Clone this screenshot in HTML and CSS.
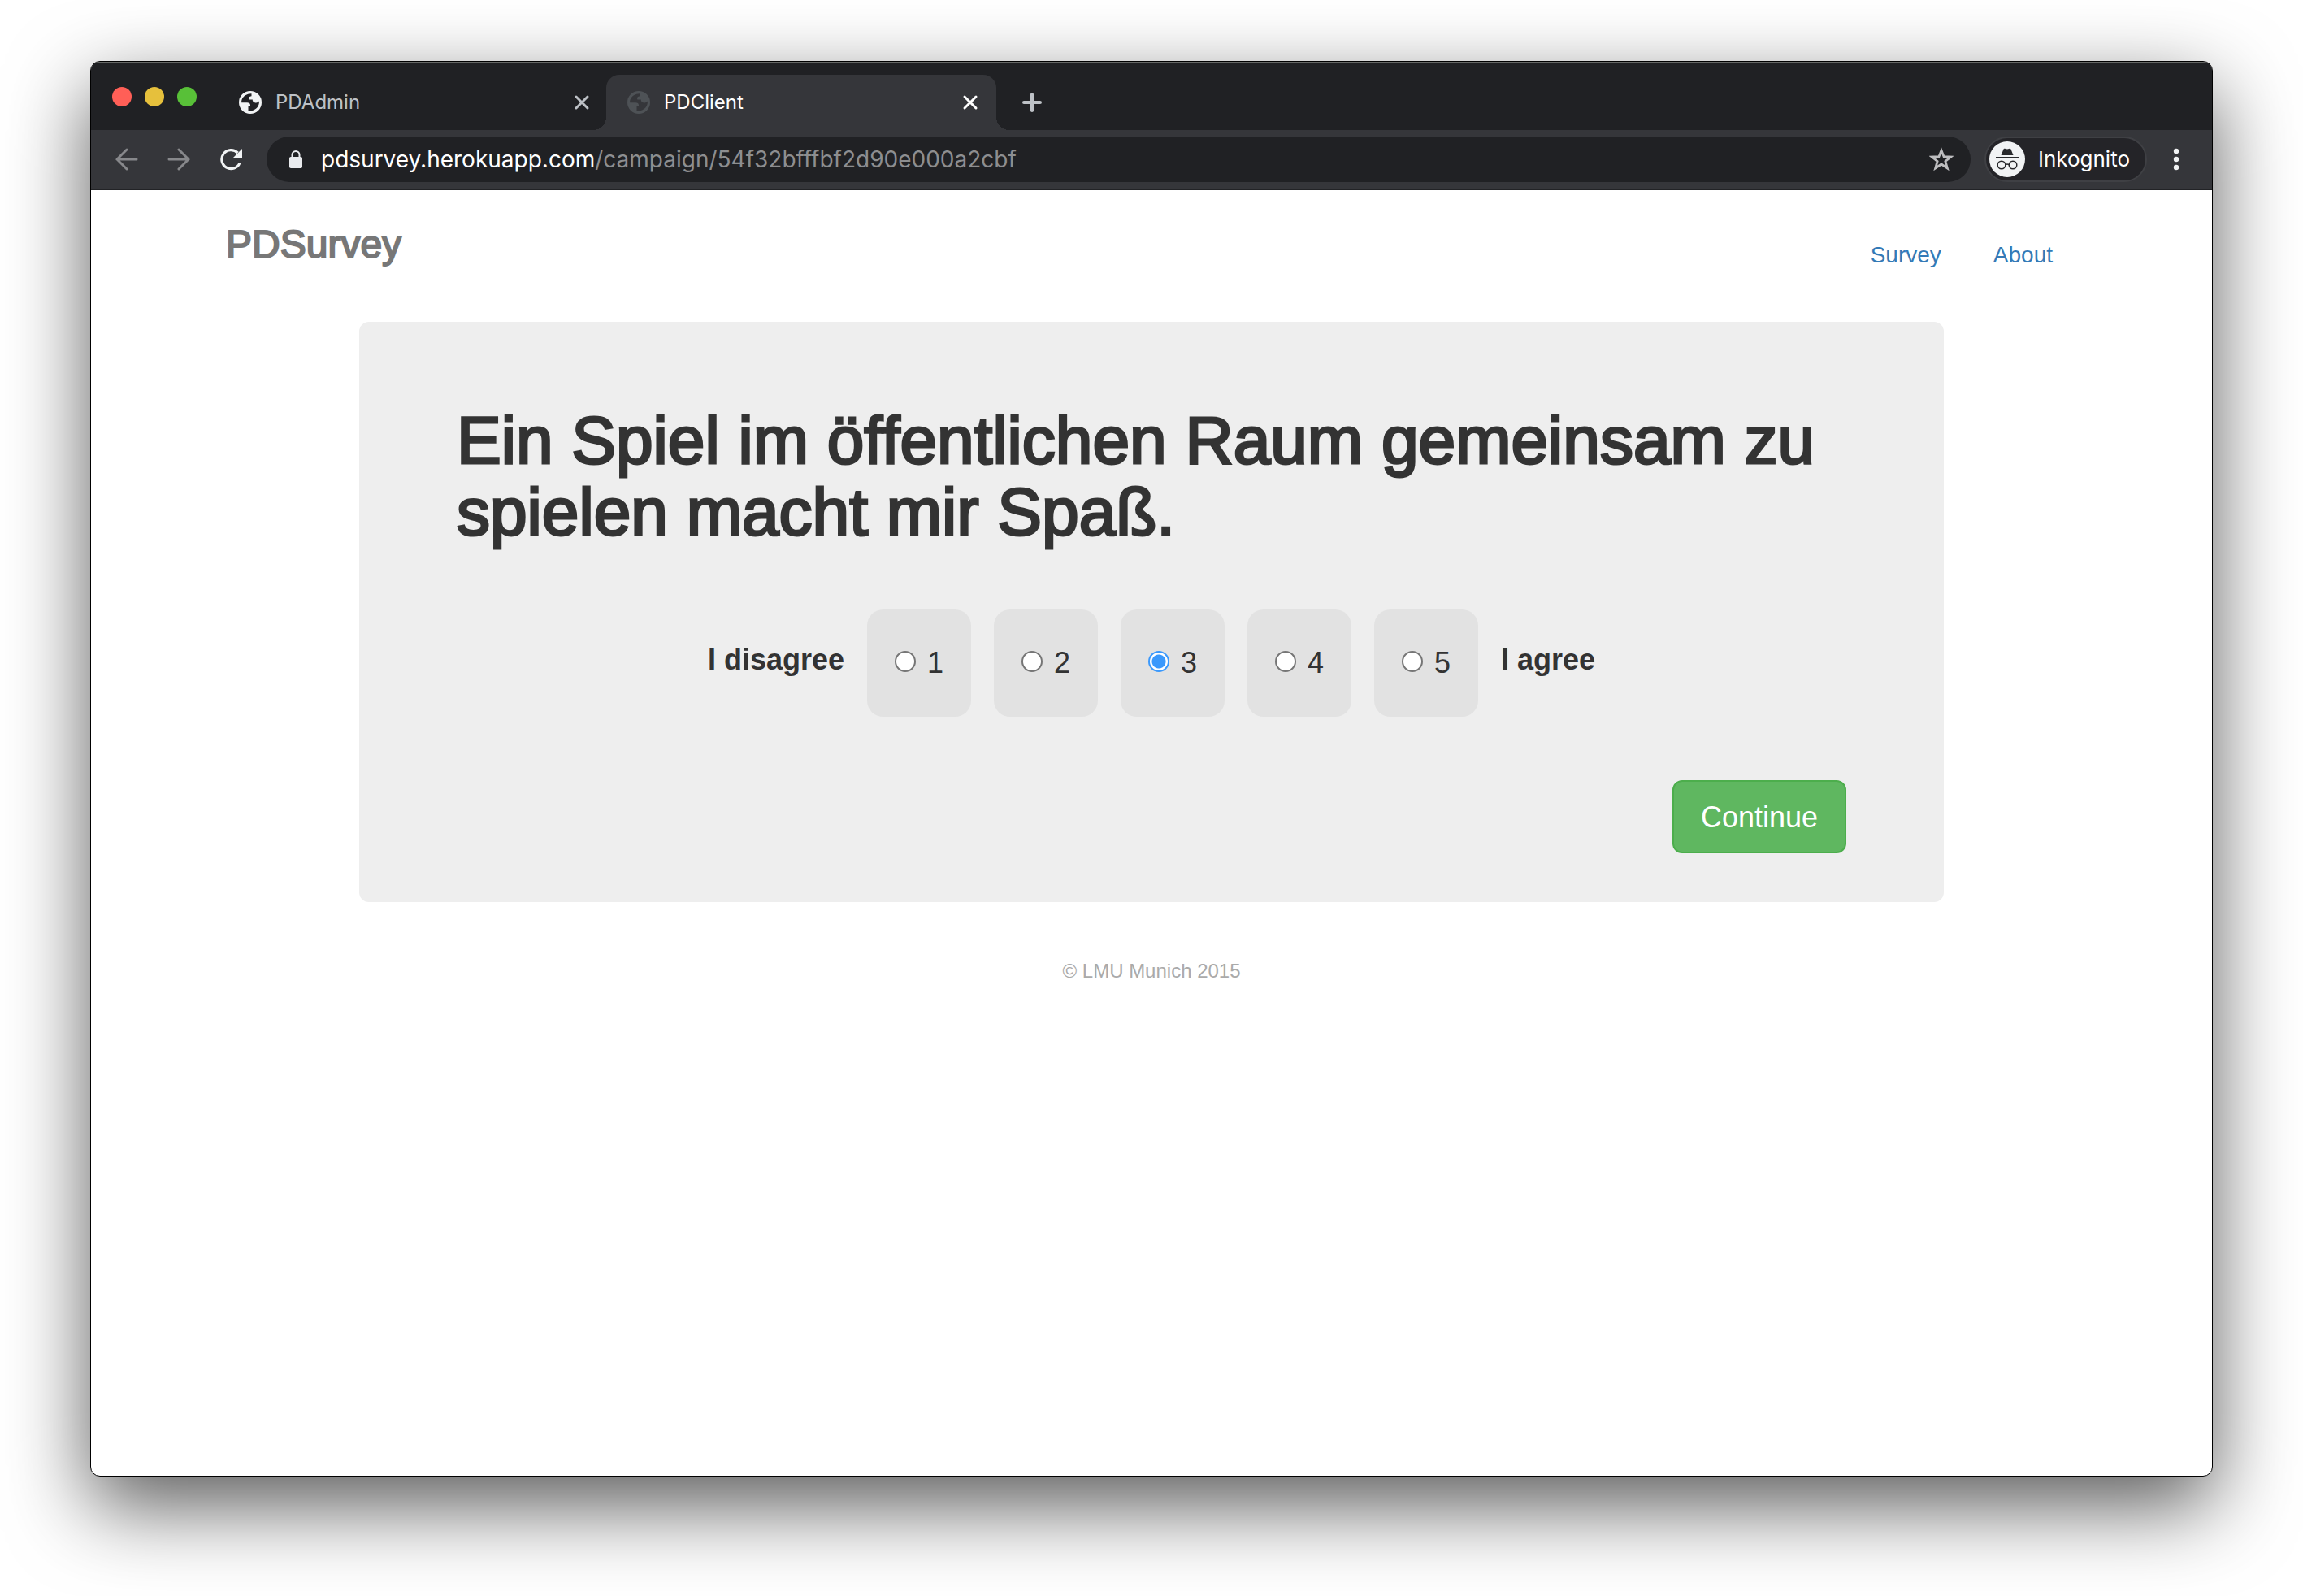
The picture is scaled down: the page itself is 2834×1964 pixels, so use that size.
FILE: index.html
```html
<!DOCTYPE html>
<html lang="de">
<head>
<meta charset="utf-8">
<title>PDClient</title>
<link rel="stylesheet" href="styles.css">
</head>
<body>
<svg class="defs" aria-hidden="true">
  <symbol id="globe" viewBox="0 0 28 28">
    <path fill-rule="evenodd" d="M14 0a14 14 0 1 0 0 28a14 14 0 0 0 0-28zM15.500 3.200C10 3 5.500 6 3.600 10.500C3.200 12 3 13 3.200 14.200H10C12.500 14.200 14 15.500 14 17.200V18.800H11.500V24.600C17 25.200 22.500 22 24.300 17C24.900 15.300 25 14 24.700 12.500C23.500 14.300 21.500 14.800 19.500 14.200C17.500 13.600 16.600 12.300 16.800 10.600H12.300C11.500 8.300 12.600 6.500 15.500 6.300z"/>
  </symbol>
  <symbol id="close" viewBox="0 0 20 20">
    <path d="M3 3L17 17M17 3L3 17" fill="none" stroke="currentColor" stroke-width="3" stroke-linecap="round"/>
  </symbol>
</svg>
<div class="window">
  <header class="chrome">
    <div class="tabstrip">
      <div class="lights"><span class="light red"></span><span class="light yellow"></span><span class="light green"></span></div>
      <div class="tab">
        <svg class="favicon"><use href="#globe"/></svg>
        <span class="tab-title">PDAdmin</span>
        <button class="icon-button" aria-label="Close PDAdmin"><svg class="close"><use href="#close"/></svg></button>
      </div>
      <div class="tab active">
        <svg class="favicon"><use href="#globe"/></svg>
        <span class="tab-title">PDClient</span>
        <button class="icon-button" aria-label="Close PDClient"><svg class="close"><use href="#close"/></svg></button>
      </div>
      <button class="icon-button new-tab" aria-label="New tab"><svg width="24" height="24" viewBox="0 0 24 24"><path d="M12 2V22M2 12H22" stroke="#bdc1c6" stroke-width="4" stroke-linecap="round"/></svg></button>
    </div>
    <div class="toolbar">
      <div class="nav-buttons">
        <button class="icon-button" aria-label="Back"><svg width="28" height="28" viewBox="0 0 28 28" fill="none" stroke="#87888b" stroke-width="3" stroke-linecap="round"><path d="M26 14H2M14 2L2 14L14 26"/></svg></button>
        <button class="icon-button" aria-label="Forward"><svg width="28" height="28" viewBox="0 0 28 28" fill="none" stroke="#87888b" stroke-width="3" stroke-linecap="round"><path d="M2 14H26M14 2L26 14L14 26"/></svg></button>
        <button class="icon-button" aria-label="Reload"><svg width="28" height="28" viewBox="0 0 28 28"><path d="M25 18.500A11.500 11.500 0 1 1 22.500 6" fill="none" stroke="#f1f3f4" stroke-width="3.200"/><path d="M28 1V12H17z" fill="#f1f3f4"/></svg></button>
      </div>
      <div class="omnibox">
        <svg class="lock" width="16" height="22" viewBox="0 0 16 22"><path d="M3.500 9V5.500a4.500 4.500 0 0 1 9 0V9" fill="none" stroke="#e8eaed" stroke-width="2"/><rect y="8" width="16" height="14" rx="2" fill="#e8eaed"/></svg>
        <div class="url"><span class="host">pdsurvey.herokuapp.com</span>/campaign/54f32bfffbf2d90e000a2cbf</div>
        <button class="icon-button" aria-label="Bookmark"><svg width="30" height="30" viewBox="0 0 30 30"><path d="M15 4L18 11.700L26.700 12L19.900 17.400L22.300 26L15 21L7.700 26L10.100 17.400L3.300 12L12 11.700z" fill="none" stroke="#bdbdbf" stroke-width="2.800"/></svg></button>
      </div>
      <div class="profile">
        <svg width="44" height="44" viewBox="0 0 44 44"><circle cx="22" cy="22" r="22" fill="#f1f3f4"/><path d="M14.500 17L17.500 9.500Q18 8.500 19 8.800L22 9.500L25 8.800Q26 8.500 26.500 9.500L29.500 17zM8 19H36V21H8z" fill="#28292c"/><g fill="none" stroke="#28292c" stroke-width="1.500"><circle cx="15" cy="29" r="4.800"/><circle cx="29" cy="29" r="4.800"/><path d="M19.800 28.600Q22 27.500 24.200 28.600"/></g></svg>
        <span>Inkognito</span>
      </div>
      <button class="icon-button" aria-label="Menu"><svg width="8" height="28" viewBox="0 0 8 28" fill="#f1f3f4"><circle cx="4" cy="4" r="3.200"/><circle cx="4" cy="14" r="3.200"/><circle cx="4" cy="24" r="3.200"/></svg></button>
    </div>
  </header>
  <div class="page">
    <div class="site-header">
      <h3 class="brand">PDSurvey</h3>
      <nav class="site-nav"><a href="#survey">Survey</a><a href="#about">About</a></nav>
    </div>
    <main class="jumbotron">
      <form>
        <h1 class="question">Ein Spiel im öffentlichen Raum gemeinsam zu spielen macht mir Spaß.</h1>
        <div class="scale">
          <strong class="scale-end">I disagree</strong>
          <label class="option"><input type="radio" name="answer" value="1">1</label>
          <label class="option"><input type="radio" name="answer" value="2">2</label>
          <label class="option"><input type="radio" name="answer" value="3" checked>3</label>
          <label class="option"><input type="radio" name="answer" value="4">4</label>
          <label class="option"><input type="radio" name="answer" value="5">5</label>
          <strong class="scale-end">I agree</strong>
        </div>
        <div class="actions"><button class="continue" type="button">Continue</button></div>
      </form>
    </main>
    <footer class="footer">© LMU Munich 2015</footer>
  </div>
</div>
</body>
</html>
```
FILE: styles.css
```css
* { box-sizing: border-box; }
body {
  margin: 0;
  padding: 75px 111px 147px;
  min-height: 100vh;
  display: flex;
  background: #fff;
  color: #333;
  font-family: "Liberation Sans", Arial, sans-serif;
}
.defs { position: absolute; width: 0; height: 0; }
svg { display: block; flex: none; }
.window {
  flex: 1;
  display: flex;
  flex-direction: column;
  border: 1px solid #000;
  border-radius: 12px;
  background: #fff;
  overflow: hidden;
  box-shadow: 0 36px 100px rgba(0, 0, 0, 0.65);
}
.icon-button {
  display: flex;
  flex: none;
  padding: 0;
  border: 0;
  background: none;
  color: inherit;
}

/* Browser frame */
.chrome { font-family: Inter, Roboto, sans-serif; background: #35363a; }
.tabstrip {
  display: flex;
  align-items: flex-end;
  height: 84px;
  padding-left: 26px;
  background: #202124;
  border-top: 2px solid #666866;
}
.lights { display: flex; gap: 16px; width: 130px; padding-bottom: 29px; }
.light { width: 24px; height: 24px; border-radius: 50%; }
.red { background: #ff5f57; }
.yellow { background: #e6c03c; }
.green { background: #58c038; }
.tab {
  position: relative;
  display: flex;
  align-items: center;
  gap: 17px;
  width: 478px;
  height: 68px;
  padding: 0 20px 0 26px;
  color: #bdc1c6;
  font-size: 24px;
  line-height: 28px;
}
.tab-title { flex: 1; }
.favicon { width: 28px; height: 28px; fill: #f1f3f4; }
.close { width: 20px; height: 20px; }
.active {
  width: 480px;
  padding-right: 22px;
  border-radius: 16px 16px 0 0;
  background: #35363a;
  color: #fff;
}
.active .favicon { fill: #4e5256; }
.active::before, .active::after {
  content: "";
  position: absolute;
  bottom: 0;
  width: 16px;
  height: 16px;
}
.active::before { right: 100%; background: radial-gradient(circle at 0 0, transparent 16px, #35363a 16px); }
.active::after { left: 100%; background: radial-gradient(circle at 100% 0, transparent 16px, #35363a 16px); }
.new-tab { margin-left: 32px; padding-bottom: 22px; }
.toolbar {
  display: flex;
  align-items: center;
  gap: 17px;
  height: 74px;
  padding: 0 40px 0 30px;
  border-bottom: 2px solid #222326;
}
.nav-buttons { display: flex; gap: 36px; margin-right: 13px; }
.omnibox {
  flex: 1;
  display: flex;
  align-items: center;
  gap: 23px;
  height: 56px;
  padding: 0 21px 0 28px;
  border-radius: 28px;
  background: #202124;
}
.url { flex: 1; color: #8d8e90; font-size: 28px; line-height: 34px; }
.host { color: #fff; }
.profile {
  display: flex;
  align-items: center;
  gap: 16px;
  height: 56px;
  margin-right: 15px;
  padding: 0 19px 0 4px;
  border: 2px solid #3f4044;
  border-radius: 28px;
  background: #242428;
  color: #fff;
  font-size: 26px;
  line-height: 32px;
}

/* Survey page */
.page { padding: 40px 166px; }
.site-header {
  display: flex;
  justify-content: space-between;
  height: 122px;
  padding-right: 30px;
}
.brand {
  margin: 0;
  color: #777;
  font-size: 48px;
  font-weight: 400;
  line-height: 54px;
  -webkit-text-stroke: 2px currentColor;
}
.site-nav { display: flex; gap: 64px; padding-top: 20px; font-size: 28px; line-height: 40px; }
.site-nav a { color: #337ab7; text-decoration: none; }
.jumbotron {
  max-width: 1950px;
  margin: 0 auto;
  padding: 102px 120px 60px;
  border-radius: 12px;
  background: #eee;
}
.question {
  margin: 0;
  font-size: 82px;
  font-weight: 400;
  line-height: 88px;
  -webkit-text-stroke: 3px currentColor;
}
.scale {
  display: flex;
  justify-content: center;
  align-items: center;
  gap: 28px;
  margin-top: 76px;
  font-size: 36px;
  line-height: 52px;
}
.scale-end { padding-bottom: 8px; }
.option {
  display: flex;
  justify-content: center;
  align-items: center;
  gap: 14px;
  width: 128px;
  height: 132px;
  border-radius: 20px;
  background: #e2e2e2;
}
.option input {
  appearance: none;
  width: 26px;
  height: 26px;
  margin: 0 0 4px;
  border: 2px solid #767676;
  border-radius: 50%;
  background: #fff;
}
.option input:checked {
  border-color: #3b99fc;
  background: radial-gradient(circle, #3b99fc 8px, #fff 9px);
}
.actions { display: flex; justify-content: flex-end; margin-top: 78px; }
.continue {
  height: 90px;
  padding: 2px 33px 0;
  border: 2px solid #4cae4c;
  border-radius: 12px;
  background: #5fb760;
  color: #fff;
  font-family: inherit;
  font-size: 36px;
  line-height: 48px;
}
.footer {
  margin-top: 68px;
  color: #aaa;
  font-size: 24px;
  line-height: 34px;
  text-align: center;
}
```
